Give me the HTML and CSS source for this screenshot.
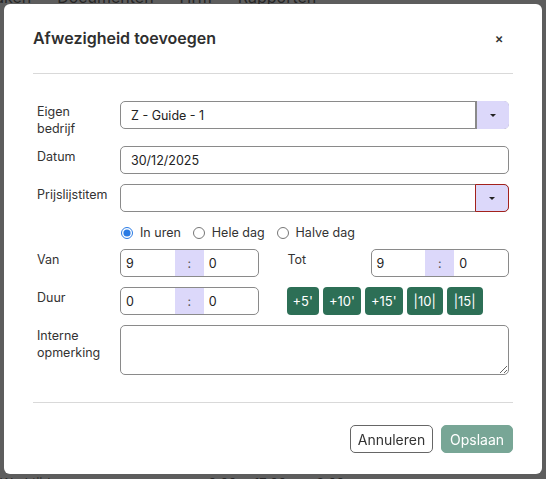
FILE: index.html
```html
<!DOCTYPE html>
<html lang="nl">
<head>
<meta charset="utf-8">
<title>Afwezigheid toevoegen</title>
<link rel="stylesheet" href="styles.css">
</head>
<body>
<div class="page">
  <nav class="page-nav">
    <span class="nav-a">aken</span><span class="nav-b">Documenten</span><span class="nav-c">Hrm</span><span class="nav-d">Rapporten</span>
  </nav>
  <div class="page-bottom">
    <span class="pb-a">Werktijd</span><span class="pb-b">9:00 - 17:00</span><span class="pb-d">8:00</span>
  </div>
</div>

<div class="modal" role="dialog">
  <div class="modal-header">
    <h2 class="modal-title">Afwezigheid toevoegen</h2>
    <button class="close" type="button">×</button>
  </div>

  <form class="modal-body">
    <div class="row row-1">
      <label class="lbl">Eigen<br>bedrijf</label>
      <div class="select">
        <span class="select-value">Z - Guide - 1</span>
        <span class="select-btn"><span class="caret"></span></span>
      </div>
    </div>

    <div class="row row-2">
      <label class="lbl">Datum</label>
      <div class="field">30/12/2025</div>
    </div>

    <div class="row row-3">
      <label class="lbl">Prijslijstitem</label>
      <div class="select">
        <span class="select-value"></span>
        <span class="select-btn select-btn-error"><span class="caret"></span></span>
      </div>
    </div>

    <div class="radios">
      <label class="radio-opt"><input type="radio" name="mode" checked><span>In uren</span></label>
      <label class="radio-opt"><input type="radio" name="mode"><span>Hele dag</span></label>
      <label class="radio-opt"><input type="radio" name="mode"><span>Halve dag</span></label>
    </div>

    <div class="row-split row-van">
      <div class="half">
        <label class="lbl">Van</label>
        <div class="time"><span class="t-h">9</span><span class="t-sep">:</span><span class="t-m">0</span></div>
      </div>
      <div class="half">
        <label class="lbl">Tot</label>
        <div class="time"><span class="t-h">9</span><span class="t-sep">:</span><span class="t-m">0</span></div>
      </div>
    </div>

    <div class="row-split row-duur">
      <div class="half">
        <label class="lbl">Duur</label>
        <div class="time"><span class="t-h">0</span><span class="t-sep">:</span><span class="t-m">0</span></div>
      </div>
      <div class="quick">
        <button type="button" class="qbtn">+5'</button>
        <button type="button" class="qbtn">+10'</button>
        <button type="button" class="qbtn">+15'</button>
        <button type="button" class="qbtn qbtn-bar">|10|</button>
        <button type="button" class="qbtn qbtn-bar">|15|</button>
      </div>
    </div>

    <div class="row row-note">
      <label class="lbl">Interne<br>opmerking</label>
      <textarea class="note"></textarea>
    </div>
  </form>

  <div class="modal-footer">
    <button type="button" class="btn btn-cancel">Annuleren</button>
    <button type="button" class="btn btn-save">Opslaan</button>
  </div>
</div>
</body>
</html>
```
FILE: styles.css
```css
* { box-sizing: border-box; }

html, body {
  margin: 0;
  height: 100%;
}

body {
  background: #5d5d5d;
  font-family: Inter, "Noto Sans", "Liberation Sans", sans-serif;
  font-size: 12.5px;
  color: #333;
  overflow: hidden;
}

/* ---------- dimmed page behind the dialog ---------- */
.page {
  height: 100%;
  display: flex;
  flex-direction: column;
  justify-content: space-between;
  color: #262626;
}

.page-nav {
  display: flex;
  margin: -12px 0 0 -5px;
  font-size: 16px;
  line-height: 19px;
}
.nav-b { margin-left: 26px; }
.nav-c { margin-left: 26px; }
.nav-d { margin-left: 26px; }

.page-bottom {
  display: flex;
  font-size: 13px;
  line-height: 16px;
  margin-bottom: -12px;
  padding-left: 0;
}
.pb-b { margin-left: 158px; word-spacing: 2px; }
.pb-d { margin-left: 30px; }

/* ---------- dialog ---------- */
.modal {
  position: fixed;
  left: 4px;
  top: 4px;
  width: 538px;
  height: 470px;
  background: #fff;
  border-radius: 6px;
  padding: 0 29px;
  display: flex;
  flex-direction: column;
}

.modal-header {
  display: flex;
  align-items: center;
  justify-content: space-between;
  padding: 23px 0 24px;
  border-bottom: 1px solid #d9d9d9;
}

.modal-title {
  margin: 0;
  font-size: 16px;
  line-height: 22px;
  font-weight: 600;
  color: #2f2f2f;
}

.close {
  border: 0;
  background: none;
  padding: 0;
  width: 24px;
  height: 22px;
  font-family: inherit;
  font-size: 13px;
  font-weight: 600;
  color: #333;
  margin-right: 2px;
}

.modal-body {
  padding: 27px 4px 27px;
  border-bottom: 1px solid #d9d9d9;
}

.row {
  display: flex;
  align-items: flex-start;
}

.lbl {
  width: 83px;
  flex: none;
  line-height: 17px;
  padding-top: 2px;
  color: #333;
}

.row-2 { margin-top: 9px; }
.row-3 { margin-top: 10px; }

.field, .select, .time, .note {
  flex: 1;
  height: 28px;
  border: 1px solid #8a8a8a;
  border-radius: 5px;
  background: #fff;
  color: #222;
}

.field {
  display: flex;
  align-items: center;
  padding-left: 10px;
}

.select {
  display: flex;
  align-items: stretch;
}
.select-value {
  flex: 1;
  display: flex;
  align-items: center;
  padding-left: 10px;
}
.select-btn {
  width: 34px;
  margin: -1px -1px -1px 0;
  background: #dcd8fa;
  border-left: 2px solid #8a8a8a;
  border-radius: 0 5px 5px 0;
  display: flex;
  align-items: center;
  justify-content: center;
}
.select-btn-error {
  border: 1px solid #a3221c;
}
.caret {
  width: 0;
  height: 0;
  border-left: 3px solid transparent;
  border-right: 3px solid transparent;
  border-top: 3px solid #222;
}

/* radios */
.radios {
  display: flex;
  align-items: center;
  margin: 12px 0 0 83px;
  height: 17px;
}
.radio-opt {
  display: flex;
  align-items: center;
  gap: 7px;
  margin-right: 11px;
  color: #333;
}
.radio-opt input {
  margin: 0 0 0 1px;
  width: 12px;
  height: 12px;
  accent-color: #2a7be4;
}

/* split rows */
.row-split {
  display: grid;
  grid-template-columns: 1fr 1fr;
  column-gap: 29px;
}
.row-van { margin-top: 8px; }
.row-duur { margin-top: 10px; }

.half {
  display: flex;
  align-items: flex-start;
}

.time {
  display: flex;
  align-items: stretch;
  overflow: hidden;
}
.t-h, .t-m {
  flex: 1;
  display: flex;
  align-items: center;
  padding-left: 5px;
}
.t-sep {
  width: 29px;
  flex: none;
  background: #dcd8fa;
  display: flex;
  align-items: center;
  justify-content: center;
  color: #555;
}

.quick {
  display: flex;
  gap: 4px;
  margin-left: -1px;
}
.qbtn {
  height: 28px;
  padding: 0 6px;
  border: 0;
  border-radius: 4px;
  background: #2d6f56;
  color: #fff;
  font-family: inherit;
  font-size: 13px;
}
.qbtn-bar { padding: 0 7px; }

.row-note { margin-top: 10px; }
.note {
  height: 50px;
  resize: vertical;
  font-family: inherit;
  font-size: 13px;
}

/* footer */
.modal-footer {
  display: flex;
  justify-content: flex-end;
  gap: 8px;
  padding: 22px 0;
}
.btn {
  height: 28px;
  padding: 0;
  border-radius: 5px;
  font-family: inherit;
  font-size: 14px;
  text-align: center;
}
.btn-cancel {
  width: 83px;
  background: #fff;
  border: 1px solid #666;
  color: #333;
}
.btn-save {
  width: 72px;
  background: #78a696;
  border: 1px solid #78a696;
  color: #fff;
}
```
